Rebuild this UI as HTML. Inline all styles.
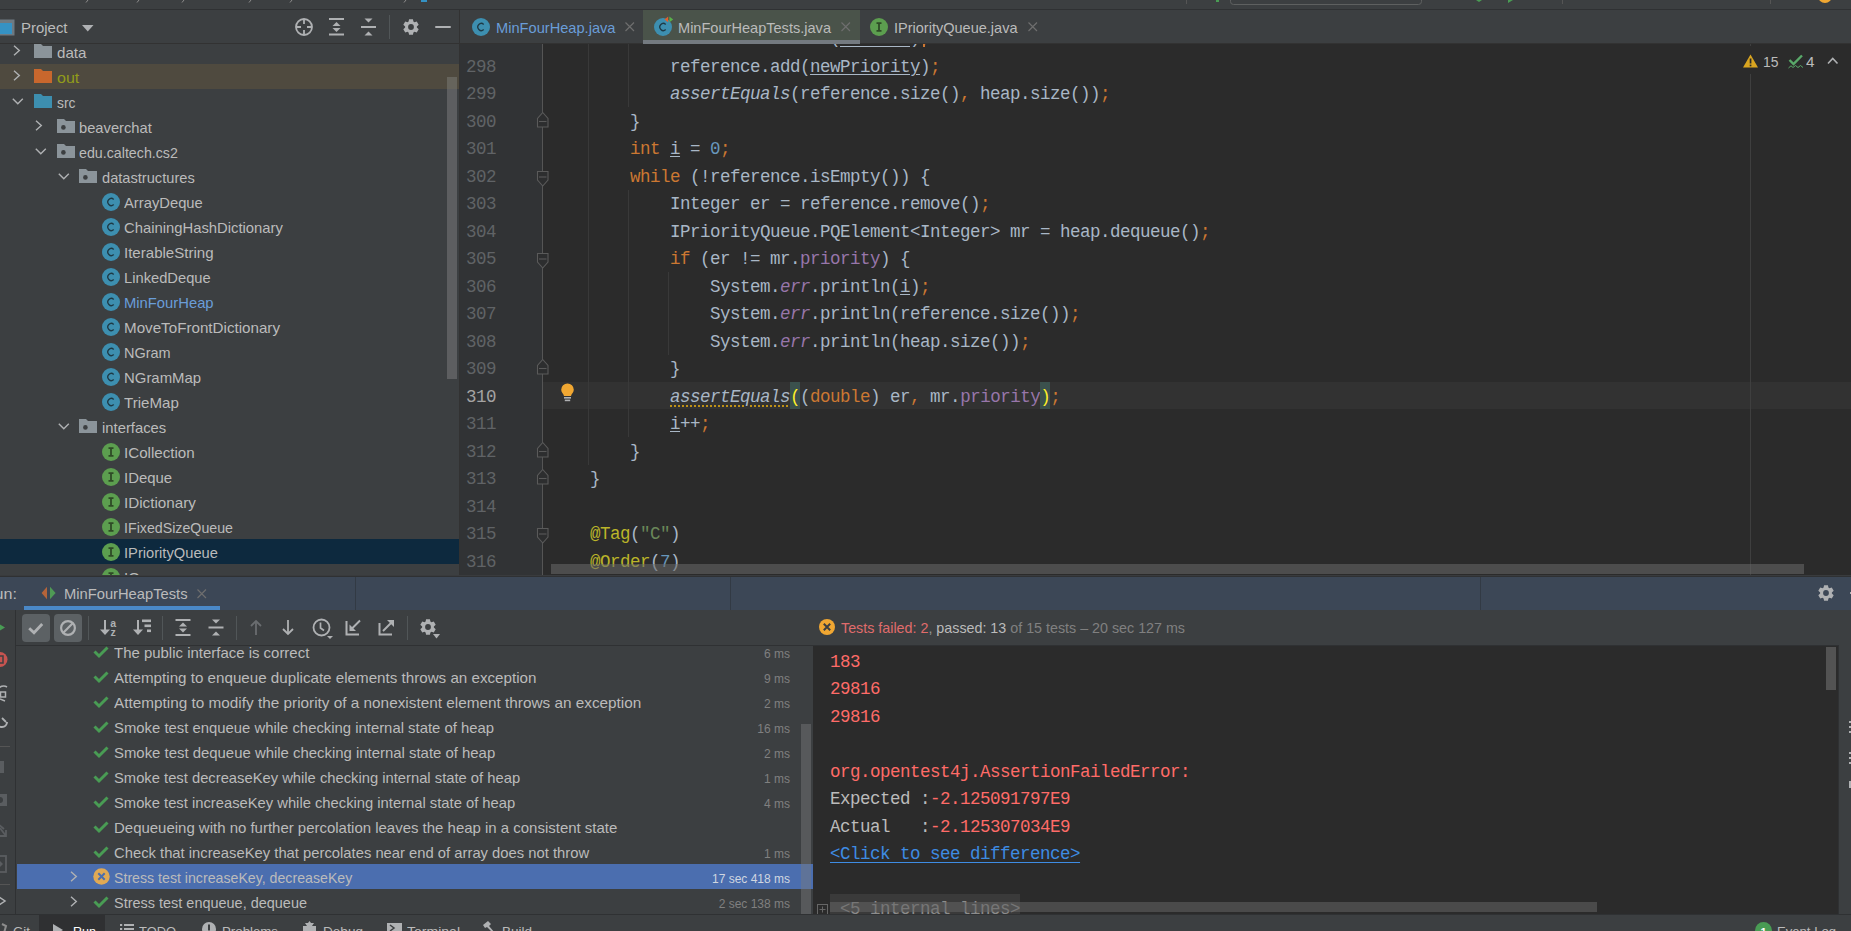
<!DOCTYPE html>
<html><head><meta charset="utf-8"><style>
html,body{margin:0;padding:0;}
body{width:1851px;height:931px;overflow:hidden;position:relative;background:#3C3F41;font-family:"Liberation Sans", sans-serif;}
body div{position:absolute;}
.t{white-space:pre;line-height:normal;transform-origin:0 0;font-family:"Liberation Sans", sans-serif;}
.m{white-space:pre;line-height:normal;font-family:"Liberation Mono", monospace;letter-spacing:-0.5px;}
svg{position:absolute;overflow:visible;}
</style></head><body>
<div style="left:0px;top:0px;width:1851px;height:9px;background:#3C3F41;"></div>
<div style="left:0px;top:9px;width:1851px;height:1px;background:#2F3133;"></div>
<svg style="left:85px;top:0px;" width="4" height="3" viewBox="0 0 4 3"><path d="M3 0 L1 2.5" stroke="#8C8C8C" stroke-width="1"/></svg>
<svg style="left:136px;top:0px;" width="4" height="3" viewBox="0 0 4 3"><path d="M3 0 L1 2.5" stroke="#8C8C8C" stroke-width="1"/></svg>
<svg style="left:181px;top:0px;" width="4" height="3" viewBox="0 0 4 3"><path d="M3 0 L1 2.5" stroke="#8C8C8C" stroke-width="1"/></svg>
<svg style="left:248px;top:0px;" width="4" height="3" viewBox="0 0 4 3"><path d="M3 0 L1 2.5" stroke="#8C8C8C" stroke-width="1"/></svg>
<svg style="left:289px;top:0px;" width="4" height="3" viewBox="0 0 4 3"><path d="M3 0 L1 2.5" stroke="#8C8C8C" stroke-width="1"/></svg>
<svg style="left:403px;top:0px;" width="4" height="3" viewBox="0 0 4 3"><path d="M3 0 L1 2.5" stroke="#8C8C8C" stroke-width="1"/></svg>
<svg style="left:421px;top:0px;" width="6" height="3" viewBox="0 0 6 3"><rect x="0" y="0" width="6" height="2" fill="#3592C4"/></svg>
<svg style="left:1230px;top:-10px;" width="192" height="15" viewBox="0 0 192 15"><rect x="0.5" y="0.5" width="191" height="14" rx="3" fill="none" stroke="#5E6060"/></svg>
<div style="left:1186px;top:0px;width:1px;height:4px;background:#555555;"></div>
<div style="left:1562px;top:0px;width:1px;height:4px;background:#555555;"></div>
<div style="left:1770px;top:0px;width:1px;height:4px;background:#555555;"></div>
<svg style="left:1816px;top:-8px;" width="18" height="12" viewBox="0 0 18 12"><circle cx="9" cy="4" r="7" fill="#F0A732"/></svg>
<svg style="left:1476px;top:0px;" width="6" height="3" viewBox="0 0 6 3"><path d="M0 0 L6 0 L3 2z" fill="#499C54"/></svg>
<svg style="left:1508px;top:0px;" width="5" height="3" viewBox="0 0 5 3"><path d="M0 0 L5 0 L0 3z" fill="#499C54"/></svg>
<svg style="left:1216px;top:0px;" width="4" height="2" viewBox="0 0 4 2"><rect width="3" height="2" fill="#499C54"/></svg>
<div style="left:0px;top:10px;width:459px;height:33px;background:#3C3F41;"></div>
<div style="left:0px;top:43px;width:459px;height:1px;background:#323232;"></div>
<svg style="left:-2px;top:19px;" width="17" height="17" viewBox="0 0 17 17"><rect x="0.5" y="0.5" width="16" height="16" fill="#6E7A82"/><rect x="2" y="4" width="12" height="11" fill="#3592C4"/></svg>
<div class="t" style="left:21px;top:19.42px;font-size:15px;color:#BBBBBB;transform:scaleX(0.9960);">Project</div>
<svg style="left:82px;top:25px;" width="12" height="7" viewBox="0 0 12 7"><path d="M0 0 L11.5 0 L5.75 6.5z" fill="#AFB1B3"/></svg>
<svg style="left:294px;top:17px;" width="20" height="20" viewBox="0 0 20 20"><circle cx="10" cy="10" r="8" fill="none" stroke="#AFB1B3" stroke-width="1.8"/><path d="M10 2v5M10 13v5M2 10h5M13 10h5" stroke="#AFB1B3" stroke-width="1.8"/></svg>
<svg style="left:328px;top:17px;" width="18" height="20" viewBox="0 0 18 20"><rect x="1" y="1" width="15" height="2" fill="#AFB1B3"/><rect x="1" y="16.5" width="15" height="2" fill="#AFB1B3"/><path d="M4.5 9 L8.5 5 L12.5 9z M4.5 11 L8.5 15 L12.5 11z" fill="#AFB1B3"/></svg>
<svg style="left:360px;top:17px;" width="18" height="20" viewBox="0 0 18 20"><path d="M4.5 1.5 L8.5 5.5 L12.5 1.5z M4.5 18.5 L8.5 14.5 L12.5 18.5z" fill="#AFB1B3"/><rect x="1" y="9" width="15" height="2" fill="#AFB1B3"/></svg>
<div style="left:389px;top:15px;width:1px;height:24px;background:#515658;"></div>
<svg style="left:403px;top:19px;" width="16" height="16" viewBox="0 0 16 16"><path fill="#AFB1B3" fill-rule="evenodd" d="M5.60 2.61 L6.06 0.24 L9.94 0.24 L10.40 2.61 L11.47 3.23 L13.75 2.44 L15.69 5.79 L13.87 7.38 L13.87 8.62 L15.69 10.21 L13.75 13.56 L11.47 12.77 L10.40 13.39 L9.94 15.76 L6.06 15.76 L5.60 13.39 L4.53 12.77 L2.25 13.56 L0.31 10.21 L2.13 8.62 L2.13 7.38 L0.31 5.79 L2.25 2.44 L4.53 3.23z M8 5.1 A2.9 2.9 0 1 0 8 10.9 A2.9 2.9 0 1 0 8 5.1z"/></svg>
<div style="left:435px;top:25.6px;width:16px;height:2.7px;background:#AFB1B3;border-radius:1px;"></div>
<div style="left:460px;top:10px;width:1391px;height:33px;background:#3C3F41;"></div>
<div style="left:460px;top:43px;width:1391px;height:1px;background:#323232;"></div>
<div style="left:643px;top:10px;width:217px;height:30px;background:#4A534A;"></div>
<div style="left:643px;top:40px;width:217px;height:4px;background:#747A80;"></div>
<svg style="left:472px;top:18px;" width="18" height="18" viewBox="0 0 18 18"><circle cx="9" cy="9" r="9" fill="#3D8FB0"/><path d="M11.7 6.4 A3.5 3.5 0 1 0 11.7 11.6" fill="none" stroke="#1E3A46" stroke-width="1.35"/></svg>
<div class="t" style="left:496px;top:19.42px;font-size:15px;color:#6A9DD8;transform:scaleX(0.9750);">MinFourHeap.java</div>
<svg style="left:625px;top:22px;" width="10" height="10" viewBox="0 0 10 10"><path d="M0.5 0.5 L9 9 M9 0.5 L0.5 9" stroke="#6E6E6E" stroke-width="1.2"/></svg>
<svg style="left:654px;top:18px;" width="18" height="18" viewBox="0 0 18 18"><circle cx="9" cy="9" r="9" fill="#3D8FB0"/><path d="M11.7 6.4 A3.5 3.5 0 1 0 11.7 11.6" fill="none" stroke="#1E3A46" stroke-width="1.35"/></svg>
<svg style="left:664px;top:16px;" width="10" height="8" viewBox="0 0 10 8"><path d="M4.2 0.5 L0.5 3.4 L4.2 6.3z" fill="#E0602D"/><path d="M5.4 0.5 L9.2 3.4 L5.4 6.3z" fill="#59B04A"/></svg>
<div class="t" style="left:678px;top:19.42px;font-size:15px;color:#BBBBBB;transform:scaleX(0.9709);">MinFourHeapTests.java</div>
<svg style="left:841px;top:22px;" width="10" height="10" viewBox="0 0 10 10"><path d="M0.5 0.5 L9 9 M9 0.5 L0.5 9" stroke="#6E6E6E" stroke-width="1.2"/></svg>
<svg style="left:870px;top:18px;" width="18" height="18" viewBox="0 0 18 18"><circle cx="9" cy="9" r="9" fill="#5C9E4F"/><path d="M6.5 5.2h5M6.5 12.8h5M9 5.2v7.6" stroke="#2E4A26" stroke-width="1.8"/></svg>
<div class="t" style="left:894px;top:19.42px;font-size:15px;color:#BBBBBB;transform:scaleX(0.9682);">IPriorityQueue.java</div>
<svg style="left:1028px;top:22px;" width="10" height="10" viewBox="0 0 10 10"><path d="M0.5 0.5 L9 9 M9 0.5 L0.5 9" stroke="#6E6E6E" stroke-width="1.2"/></svg>
<div style="left:0px;top:44px;width:459px;height:531px;background:#3C3F41;"></div>
<div style="left:0px;top:64px;width:459px;height:25px;background:#4F4A3F;"></div>
<div style="left:0px;top:539px;width:459px;height:25px;background:#0D293E;"></div>
<div style="left:459px;top:10px;width:1px;height:565px;background:#323232;"></div>
<div style="left:447px;top:77px;width:10px;height:302px;background:#5D5E60;"></div>
<div style="left:447px;top:77px;width:10px;height:12px;background:#66645C;"></div>
<svg style="left:13px;top:45px;" width="8" height="11" viewBox="0 0 8 11"><path d="M1 0.8 L6.3 5.5 L1 10.2" fill="none" stroke="#AFB1B3" stroke-width="1.4"/></svg>
<svg style="left:34px;top:44px;" width="18" height="14" viewBox="0 0 18 14"><path d="M0 0h7l2 2h9v12H0z" fill="#8B949A"/></svg>
<div class="t" style="left:57px;top:44.42px;font-size:15px;color:#BBBBBB;transform:scaleX(1.0102);">data</div>
<svg style="left:13px;top:70px;" width="8" height="11" viewBox="0 0 8 11"><path d="M1 0.8 L6.3 5.5 L1 10.2" fill="none" stroke="#AFB1B3" stroke-width="1.4"/></svg>
<svg style="left:34px;top:69px;" width="18" height="14" viewBox="0 0 18 14"><path d="M0 0h7l2 2h9v12H0z" fill="#C8672D"/></svg>
<div class="t" style="left:57px;top:69.42px;font-size:15px;color:#929C1A;transform:scaleX(1.0691);">out</div>
<svg style="left:12px;top:98px;" width="12" height="7" viewBox="0 0 12 7"><path d="M0.8 0.8 L5.8 5.8 L10.8 0.8" fill="none" stroke="#AFB1B3" stroke-width="1.4"/></svg>
<svg style="left:34px;top:94px;" width="18" height="14" viewBox="0 0 18 14"><path d="M0 0h7l2 2h9v12H0z" fill="#3D8FB0"/></svg>
<div class="t" style="left:57px;top:94.42px;font-size:15px;color:#BBBBBB;transform:scaleX(0.9250);">src</div>
<svg style="left:35px;top:120px;" width="8" height="11" viewBox="0 0 8 11"><path d="M1 0.8 L6.3 5.5 L1 10.2" fill="none" stroke="#AFB1B3" stroke-width="1.4"/></svg>
<svg style="left:57px;top:119px;" width="18" height="14" viewBox="0 0 18 14"><path d="M0 0h7l2 2h9v12H0z" fill="#8B949A"/><circle cx="6.4" cy="8.4" r="2.3" fill="#3C3F41"/></svg>
<div class="t" style="left:79px;top:119.42px;font-size:15px;color:#BBBBBB;transform:scaleX(0.9809);">beaverchat</div>
<svg style="left:34.5px;top:148px;" width="12" height="7" viewBox="0 0 12 7"><path d="M0.8 0.8 L5.8 5.8 L10.8 0.8" fill="none" stroke="#AFB1B3" stroke-width="1.4"/></svg>
<svg style="left:57px;top:144px;" width="18" height="14" viewBox="0 0 18 14"><path d="M0 0h7l2 2h9v12H0z" fill="#8B949A"/><circle cx="6.4" cy="8.4" r="2.3" fill="#3C3F41"/></svg>
<div class="t" style="left:79px;top:144.43px;font-size:15px;color:#BBBBBB;transform:scaleX(0.9488);">edu.caltech.cs2</div>
<svg style="left:57.5px;top:173px;" width="12" height="7" viewBox="0 0 12 7"><path d="M0.8 0.8 L5.8 5.8 L10.8 0.8" fill="none" stroke="#AFB1B3" stroke-width="1.4"/></svg>
<svg style="left:79px;top:169px;" width="18" height="14" viewBox="0 0 18 14"><path d="M0 0h7l2 2h9v12H0z" fill="#8B949A"/><circle cx="6.4" cy="8.4" r="2.3" fill="#3C3F41"/></svg>
<div class="t" style="left:102px;top:169.43px;font-size:15px;color:#BBBBBB;transform:scaleX(0.9753);">datastructures</div>
<svg style="left:102px;top:193px;" width="18" height="18" viewBox="0 0 18 18"><circle cx="9" cy="9" r="9" fill="#3D8FB0"/><path d="M11.7 6.4 A3.5 3.5 0 1 0 11.7 11.6" fill="none" stroke="#1E3A46" stroke-width="1.35"/></svg>
<div class="t" style="left:124px;top:194.43px;font-size:15px;color:#BBBBBB;transform:scaleX(0.9844);">ArrayDeque</div>
<svg style="left:102px;top:218px;" width="18" height="18" viewBox="0 0 18 18"><circle cx="9" cy="9" r="9" fill="#3D8FB0"/><path d="M11.7 6.4 A3.5 3.5 0 1 0 11.7 11.6" fill="none" stroke="#1E3A46" stroke-width="1.35"/></svg>
<div class="t" style="left:124px;top:219.43px;font-size:15px;color:#BBBBBB;transform:scaleX(0.9874);">ChainingHashDictionary</div>
<svg style="left:102px;top:243px;" width="18" height="18" viewBox="0 0 18 18"><circle cx="9" cy="9" r="9" fill="#3D8FB0"/><path d="M11.7 6.4 A3.5 3.5 0 1 0 11.7 11.6" fill="none" stroke="#1E3A46" stroke-width="1.35"/></svg>
<div class="t" style="left:124px;top:244.43px;font-size:15px;color:#BBBBBB;transform:scaleX(1.0043);">IterableString</div>
<svg style="left:102px;top:268px;" width="18" height="18" viewBox="0 0 18 18"><circle cx="9" cy="9" r="9" fill="#3D8FB0"/><path d="M11.7 6.4 A3.5 3.5 0 1 0 11.7 11.6" fill="none" stroke="#1E3A46" stroke-width="1.35"/></svg>
<div class="t" style="left:124px;top:269.43px;font-size:15px;color:#BBBBBB;transform:scaleX(0.9807);">LinkedDeque</div>
<svg style="left:102px;top:293px;" width="18" height="18" viewBox="0 0 18 18"><circle cx="9" cy="9" r="9" fill="#3D8FB0"/><path d="M11.7 6.4 A3.5 3.5 0 1 0 11.7 11.6" fill="none" stroke="#1E3A46" stroke-width="1.35"/></svg>
<div class="t" style="left:124px;top:294.43px;font-size:15px;color:#6A9DD8;transform:scaleX(0.9860);">MinFourHeap</div>
<svg style="left:102px;top:318px;" width="18" height="18" viewBox="0 0 18 18"><circle cx="9" cy="9" r="9" fill="#3D8FB0"/><path d="M11.7 6.4 A3.5 3.5 0 1 0 11.7 11.6" fill="none" stroke="#1E3A46" stroke-width="1.35"/></svg>
<div class="t" style="left:124px;top:319.43px;font-size:15px;color:#BBBBBB;transform:scaleX(1.0116);">MoveToFrontDictionary</div>
<svg style="left:102px;top:343px;" width="18" height="18" viewBox="0 0 18 18"><circle cx="9" cy="9" r="9" fill="#3D8FB0"/><path d="M11.7 6.4 A3.5 3.5 0 1 0 11.7 11.6" fill="none" stroke="#1E3A46" stroke-width="1.35"/></svg>
<div class="t" style="left:124px;top:344.43px;font-size:15px;color:#BBBBBB;transform:scaleX(0.9660);">NGram</div>
<svg style="left:102px;top:368px;" width="18" height="18" viewBox="0 0 18 18"><circle cx="9" cy="9" r="9" fill="#3D8FB0"/><path d="M11.7 6.4 A3.5 3.5 0 1 0 11.7 11.6" fill="none" stroke="#1E3A46" stroke-width="1.35"/></svg>
<div class="t" style="left:124px;top:369.43px;font-size:15px;color:#BBBBBB;transform:scaleX(0.9946);">NGramMap</div>
<svg style="left:102px;top:393px;" width="18" height="18" viewBox="0 0 18 18"><circle cx="9" cy="9" r="9" fill="#3D8FB0"/><path d="M11.7 6.4 A3.5 3.5 0 1 0 11.7 11.6" fill="none" stroke="#1E3A46" stroke-width="1.35"/></svg>
<div class="t" style="left:124px;top:394.43px;font-size:15px;color:#BBBBBB;transform:scaleX(1.0061);">TrieMap</div>
<svg style="left:57.5px;top:423px;" width="12" height="7" viewBox="0 0 12 7"><path d="M0.8 0.8 L5.8 5.8 L10.8 0.8" fill="none" stroke="#AFB1B3" stroke-width="1.4"/></svg>
<svg style="left:79px;top:419px;" width="18" height="14" viewBox="0 0 18 14"><path d="M0 0h7l2 2h9v12H0z" fill="#8B949A"/><circle cx="6.4" cy="8.4" r="2.3" fill="#3C3F41"/></svg>
<div class="t" style="left:102px;top:419.43px;font-size:15px;color:#BBBBBB;transform:scaleX(0.9885);">interfaces</div>
<svg style="left:102px;top:443px;" width="18" height="18" viewBox="0 0 18 18"><circle cx="9" cy="9" r="9" fill="#5C9E4F"/><path d="M6.5 5.2h5M6.5 12.8h5M9 5.2v7.6" stroke="#2E4A26" stroke-width="1.8"/></svg>
<div class="t" style="left:124px;top:444.43px;font-size:15px;color:#BBBBBB;transform:scaleX(1.0093);">ICollection</div>
<svg style="left:102px;top:468px;" width="18" height="18" viewBox="0 0 18 18"><circle cx="9" cy="9" r="9" fill="#5C9E4F"/><path d="M6.5 5.2h5M6.5 12.8h5M9 5.2v7.6" stroke="#2E4A26" stroke-width="1.8"/></svg>
<div class="t" style="left:124px;top:469.43px;font-size:15px;color:#BBBBBB;transform:scaleX(0.9943);">IDeque</div>
<svg style="left:102px;top:493px;" width="18" height="18" viewBox="0 0 18 18"><circle cx="9" cy="9" r="9" fill="#5C9E4F"/><path d="M6.5 5.2h5M6.5 12.8h5M9 5.2v7.6" stroke="#2E4A26" stroke-width="1.8"/></svg>
<div class="t" style="left:124px;top:494.43px;font-size:15px;color:#BBBBBB;transform:scaleX(1.0147);">IDictionary</div>
<svg style="left:102px;top:518px;" width="18" height="18" viewBox="0 0 18 18"><circle cx="9" cy="9" r="9" fill="#5C9E4F"/><path d="M6.5 5.2h5M6.5 12.8h5M9 5.2v7.6" stroke="#2E4A26" stroke-width="1.8"/></svg>
<div class="t" style="left:124px;top:519.42px;font-size:15px;color:#BBBBBB;transform:scaleX(0.9472);">IFixedSizeQueue</div>
<svg style="left:102px;top:543px;" width="18" height="18" viewBox="0 0 18 18"><circle cx="9" cy="9" r="9" fill="#5C9E4F"/><path d="M6.5 5.2h5M6.5 12.8h5M9 5.2v7.6" stroke="#2E4A26" stroke-width="1.8"/></svg>
<div class="t" style="left:124px;top:544.42px;font-size:15px;color:#BBBBBB;transform:scaleX(0.9794);">IPriorityQueue</div>
<svg style="left:102px;top:568px;" width="18" height="18" viewBox="0 0 18 18"><circle cx="9" cy="9" r="9" fill="#5C9E4F"/><path d="M6.5 5.2h5M6.5 12.8h5M9 5.2v7.6" stroke="#2E4A26" stroke-width="1.8"/></svg>
<div class="t" style="left:124px;top:569.42px;font-size:15px;color:#BBBBBB;">IQueue</div>
<div style="left:0px;top:575px;width:1851px;height:2px;background:#2B2B2B;"></div>
<div style="left:460px;top:44px;width:1391px;height:531px;overflow:hidden;">
<div style="left:0px;top:0px;width:83px;height:531px;background:#313335;"></div>
<div style="left:83px;top:0px;width:1308px;height:531px;background:#2B2B2B;"></div>
<div style="left:83px;top:338px;width:1308px;height:27px;background:#323232;"></div>
<div style="left:330px;top:338px;width:10px;height:27px;background:#3B514D;"></div>
<div style="left:580px;top:338px;width:10px;height:27px;background:#3B514D;"></div>
<div style="left:1290px;top:0px;width:1px;height:2px;background:#3F3F3F;"></div>
<div style="left:1290px;top:30px;width:1px;height:501px;background:#3F3F3F;"></div>
<div style="left:128px;top:0px;width:1px;height:420.5px;background:#393939;"></div>
<div style="left:168px;top:0px;width:1px;height:63px;background:#393939;"></div>
<div style="left:168px;top:145.5px;width:1px;height:247.5px;background:#393939;"></div>
<div style="left:208px;top:228px;width:1px;height:82.5px;background:#393939;"></div>
<div style="left:82px;top:0px;width:1px;height:531px;background:#555555;"></div>
<svg style="left:77px;top:67.8px;" width="12" height="16" viewBox="0 0 12 16"><path d="M5.75 0.5 L11 6.5 V15 H0.5 V6.5z" fill="#2D2E2F" stroke="#5A5A5A" stroke-width="1.1"/><path d="M2 9.5 H9.5" stroke="#5A5A5A" stroke-width="1.1"/></svg>
<svg style="left:77px;top:314.8px;" width="12" height="16" viewBox="0 0 12 16"><path d="M5.75 0.5 L11 6.5 V15 H0.5 V6.5z" fill="#2D2E2F" stroke="#5A5A5A" stroke-width="1.1"/><path d="M2 9.5 H9.5" stroke="#5A5A5A" stroke-width="1.1"/></svg>
<svg style="left:77px;top:397.8px;" width="12" height="16" viewBox="0 0 12 16"><path d="M5.75 0.5 L11 6.5 V15 H0.5 V6.5z" fill="#2D2E2F" stroke="#5A5A5A" stroke-width="1.1"/><path d="M2 9.5 H9.5" stroke="#5A5A5A" stroke-width="1.1"/></svg>
<svg style="left:77px;top:424.8px;" width="12" height="16" viewBox="0 0 12 16"><path d="M5.75 0.5 L11 6.5 V15 H0.5 V6.5z" fill="#2D2E2F" stroke="#5A5A5A" stroke-width="1.1"/><path d="M2 9.5 H9.5" stroke="#5A5A5A" stroke-width="1.1"/></svg>
<svg style="left:77px;top:126.6px;" width="12" height="16" viewBox="0 0 12 16"><path d="M0.5 0.5 H11 V9 L5.75 15 L0.5 9z" fill="#2D2E2F" stroke="#5A5A5A" stroke-width="1.1"/><path d="M2 6 H9.5" stroke="#5A5A5A" stroke-width="1.1"/></svg>
<svg style="left:77px;top:208.6px;" width="12" height="16" viewBox="0 0 12 16"><path d="M0.5 0.5 H11 V9 L5.75 15 L0.5 9z" fill="#2D2E2F" stroke="#5A5A5A" stroke-width="1.1"/><path d="M2 6 H9.5" stroke="#5A5A5A" stroke-width="1.1"/></svg>
<svg style="left:77px;top:483.6px;" width="12" height="16" viewBox="0 0 12 16"><path d="M0.5 0.5 H11 V9 L5.75 15 L0.5 9z" fill="#2D2E2F" stroke="#5A5A5A" stroke-width="1.1"/><path d="M2 6 H9.5" stroke="#5A5A5A" stroke-width="1.1"/></svg>
<div class="m" style="left:6px;top:13.43px;font-size:17.5px;"><span style="color:#606366">298</span></div>
<div class="m" style="left:6px;top:40.43px;font-size:17.5px;"><span style="color:#606366">299</span></div>
<div class="m" style="left:6px;top:68.43px;font-size:17.5px;"><span style="color:#606366">300</span></div>
<div class="m" style="left:6px;top:95.43px;font-size:17.5px;"><span style="color:#606366">301</span></div>
<div class="m" style="left:6px;top:123.43px;font-size:17.5px;"><span style="color:#606366">302</span></div>
<div class="m" style="left:6px;top:150.43px;font-size:17.5px;"><span style="color:#606366">303</span></div>
<div class="m" style="left:6px;top:178.43px;font-size:17.5px;"><span style="color:#606366">304</span></div>
<div class="m" style="left:6px;top:205.43px;font-size:17.5px;"><span style="color:#606366">305</span></div>
<div class="m" style="left:6px;top:233.43px;font-size:17.5px;"><span style="color:#606366">306</span></div>
<div class="m" style="left:6px;top:260.43px;font-size:17.5px;"><span style="color:#606366">307</span></div>
<div class="m" style="left:6px;top:288.43px;font-size:17.5px;"><span style="color:#606366">308</span></div>
<div class="m" style="left:6px;top:315.43px;font-size:17.5px;"><span style="color:#606366">309</span></div>
<div class="m" style="left:6px;top:343.43px;font-size:17.5px;"><span style="color:#A4A3A3">310</span></div>
<div class="m" style="left:6px;top:370.43px;font-size:17.5px;"><span style="color:#606366">311</span></div>
<div class="m" style="left:6px;top:398.43px;font-size:17.5px;"><span style="color:#606366">312</span></div>
<div class="m" style="left:6px;top:425.43px;font-size:17.5px;"><span style="color:#606366">313</span></div>
<div class="m" style="left:6px;top:453.43px;font-size:17.5px;"><span style="color:#606366">314</span></div>
<div class="m" style="left:6px;top:480.43px;font-size:17.5px;"><span style="color:#606366">315</span></div>
<div class="m" style="left:6px;top:508.43px;font-size:17.5px;"><span style="color:#606366">316</span></div>
<div class="m" style="left:210px;top:-16.07px;font-size:17.5px;"><span style="color:#A9B7C6">reference.remove(element)</span><span style="color:#CC7832">;</span></div>
<div style="left:380px;top:2px;width:70px;height:1px;background:#A9B7C6;"></div>
<div style="left:463px;top:0px;width:2px;height:3px;background:#CC7832;"></div>
<div class="m" style="left:210px;top:13.43px;font-size:17.5px;"><span style="color:#A9B7C6">reference.add(</span><span style="color:#A9B7C6;text-decoration:underline;text-decoration-color:#A9B7C6;text-underline-offset:2px">newPriority</span><span style="color:#A9B7C6">)</span><span style="color:#CC7832">;</span></div>
<div class="m" style="left:210px;top:40.43px;font-size:17.5px;"><span style="color:#A9B7C6;font-style:italic">assertEquals</span><span style="color:#A9B7C6">(reference.size()</span><span style="color:#CC7832">,</span><span style="color:#A9B7C6"> heap.size())</span><span style="color:#CC7832">;</span></div>
<div class="m" style="left:170px;top:68.43px;font-size:17.5px;"><span style="color:#A9B7C6">}</span></div>
<div class="m" style="left:170px;top:95.43px;font-size:17.5px;"><span style="color:#CC7832">int </span><span style="color:#A9B7C6;text-decoration:underline;text-decoration-color:#A9B7C6;text-underline-offset:2px">i</span><span style="color:#A9B7C6"> = </span><span style="color:#6897BB">0</span><span style="color:#CC7832">;</span></div>
<div class="m" style="left:170px;top:123.43px;font-size:17.5px;"><span style="color:#CC7832">while </span><span style="color:#A9B7C6">(!reference.isEmpty()) {</span></div>
<div class="m" style="left:210px;top:150.43px;font-size:17.5px;"><span style="color:#A9B7C6">Integer er = reference.remove()</span><span style="color:#CC7832">;</span></div>
<div class="m" style="left:210px;top:178.43px;font-size:17.5px;"><span style="color:#A9B7C6">IPriorityQueue.PQElement&lt;Integer&gt; mr = heap.dequeue()</span><span style="color:#CC7832">;</span></div>
<div class="m" style="left:210px;top:205.43px;font-size:17.5px;"><span style="color:#CC7832">if </span><span style="color:#A9B7C6">(er != mr.</span><span style="color:#9876AA">priority</span><span style="color:#A9B7C6">) {</span></div>
<div class="m" style="left:250px;top:233.43px;font-size:17.5px;"><span style="color:#A9B7C6">System.</span><span style="color:#9876AA;font-style:italic">err</span><span style="color:#A9B7C6">.println(</span><span style="color:#A9B7C6;text-decoration:underline;text-decoration-color:#A9B7C6;text-underline-offset:2px">i</span><span style="color:#A9B7C6">)</span><span style="color:#CC7832">;</span></div>
<div class="m" style="left:250px;top:260.43px;font-size:17.5px;"><span style="color:#A9B7C6">System.</span><span style="color:#9876AA;font-style:italic">err</span><span style="color:#A9B7C6">.println(reference.size())</span><span style="color:#CC7832">;</span></div>
<div class="m" style="left:250px;top:288.43px;font-size:17.5px;"><span style="color:#A9B7C6">System.</span><span style="color:#9876AA;font-style:italic">err</span><span style="color:#A9B7C6">.println(heap.size())</span><span style="color:#CC7832">;</span></div>
<div class="m" style="left:210px;top:315.43px;font-size:17.5px;"><span style="color:#A9B7C6">}</span></div>
<div class="m" style="left:210px;top:343.43px;font-size:17.5px;"><span style="color:#A9B7C6;font-style:italic;text-decoration:underline dotted #BE9117;text-underline-offset:3px;text-decoration-thickness:2px">assertEquals</span><span style="color:#FFEF28;background:#3B514D">(</span><span style="color:#A9B7C6">(</span><span style="color:#CC7832">double</span><span style="color:#A9B7C6">) er</span><span style="color:#CC7832">,</span><span style="color:#A9B7C6"> mr.</span><span style="color:#9876AA">priority</span><span style="color:#FFEF28;background:#3B514D">)</span><span style="color:#CC7832">;</span></div>
<div class="m" style="left:210px;top:370.43px;font-size:17.5px;"><span style="color:#A9B7C6;text-decoration:underline;text-decoration-color:#A9B7C6;text-underline-offset:2px">i</span><span style="color:#A9B7C6">++</span><span style="color:#CC7832">;</span></div>
<div class="m" style="left:170px;top:398.43px;font-size:17.5px;"><span style="color:#A9B7C6">}</span></div>
<div class="m" style="left:130px;top:425.43px;font-size:17.5px;"><span style="color:#A9B7C6">}</span></div>
<div class="m" style="left:130px;top:480.43px;font-size:17.5px;"><span style="color:#BBB529">@Tag</span><span style="color:#A9B7C6">(</span><span style="color:#6A8759">&quot;C&quot;</span><span style="color:#A9B7C6">)</span></div>
<div class="m" style="left:130px;top:508.43px;font-size:17.5px;"><span style="color:#BBB529">@Order</span><span style="color:#A9B7C6">(</span><span style="color:#6897BB">7</span><span style="color:#A9B7C6">)</span></div>
<svg style="left:100px;top:339px;" width="16" height="20" viewBox="0 0 16 20"><path d="M7.5 0.5 A6.3 6.3 0 0 1 13.8 6.8 C13.8 9.6 11.6 10.6 11 13 H4 C3.4 10.6 1.2 9.6 1.2 6.8 A6.3 6.3 0 0 1 7.5 0.5z" fill="#F0A732"/><rect x="4" y="14" width="7" height="1.6" fill="#AFB1B3"/><rect x="4.8" y="16.6" width="5.4" height="1.6" fill="#AFB1B3"/></svg>
<svg style="left:1283px;top:10px;" width="16" height="14" viewBox="0 0 16 14"><path d="M7.5 0.5 L15 13.5 H0 z" fill="#D9A520"/><rect x="6.7" y="4.5" width="1.7" height="5" fill="#2B2B2B"/><rect x="6.7" y="10.6" width="1.7" height="1.7" fill="#2B2B2B"/></svg>
<div class="t" style="left:1303px;top:8.92px;font-size:15px;color:#BBBBBB;transform:scaleX(0.9288);">15</div>
<svg style="left:1328px;top:9px;" width="16" height="16" viewBox="0 0 16 16"><path d="M1.5 7 L5.5 11 L14 2.5" fill="none" stroke="#59A869" stroke-width="2.4"/><path d="M0.5 15 L3 12.8 L5 14.5 L7.5 12.5 L10 14.5 L12.5 12.5 L15 14.5" fill="none" stroke="#59A869" stroke-width="1"/></svg>
<div class="t" style="left:1346px;top:8.92px;font-size:15px;color:#BBBBBB;transform:scaleX(1.0187);">4</div>
<svg style="left:1367px;top:13px;" width="12" height="8" viewBox="0 0 12 8"><path d="M1 6.5 L5.75 1.5 L10.5 6.5" fill="none" stroke="#AFB1B3" stroke-width="1.6"/></svg>
<div style="left:91px;top:520px;width:1253px;height:10px;background:rgba(106,106,106,0.55);"></div>
</div>
<div style="left:0px;top:575px;width:1851px;height:1px;background:#393B3D;"></div>
<div style="left:0px;top:576px;width:1851px;height:1px;background:#2F3133;"></div>
<div style="left:0px;top:577px;width:1851px;height:33px;background:#3C4756;"></div>
<div style="left:730px;top:577px;width:1px;height:33px;background:#323A44;"></div>
<div style="left:355px;top:577px;width:1px;height:33px;background:#323A44;"></div>
<div style="left:1480px;top:577px;width:1px;height:33px;background:#323A44;"></div>
<div class="t" style="left:-17.5px;top:584.92px;font-size:15px;color:#BBBBBB;transform:scaleX(1.0730);">Run:</div>
<svg style="left:41px;top:586px;" width="16" height="14" viewBox="0 0 16 14"><path d="M6 0.8 L0.6 7 L6 13.2z" fill="#B5643A"/><path d="M9 0.8 L14.6 7 L9 13.2z" fill="#4F9A55"/></svg>
<div class="t" style="left:64px;top:584.92px;font-size:15px;color:#BBBBBB;transform:scaleX(0.9810);">MinFourHeapTests</div>
<svg style="left:197px;top:589px;" width="10" height="10" viewBox="0 0 10 10"><path d="M0.5 0.5 L9 9 M9 0.5 L0.5 9" stroke="#6E6E6E" stroke-width="1.2"/></svg>
<div style="left:24px;top:606px;width:196px;height:4px;background:#4A88C7;"></div>
<svg style="left:1818px;top:585px;" width="16" height="16" viewBox="0 0 16 16"><path fill="#AFB1B3" fill-rule="evenodd" d="M5.60 2.61 L6.06 0.24 L9.94 0.24 L10.40 2.61 L11.47 3.23 L13.75 2.44 L15.69 5.79 L13.87 7.38 L13.87 8.62 L15.69 10.21 L13.75 13.56 L11.47 12.77 L10.40 13.39 L9.94 15.76 L6.06 15.76 L5.60 13.39 L4.53 12.77 L2.25 13.56 L0.31 10.21 L2.13 8.62 L2.13 7.38 L0.31 5.79 L2.25 2.44 L4.53 3.23z M8 5.1 A2.9 2.9 0 1 0 8 10.9 A2.9 2.9 0 1 0 8 5.1z"/></svg>
<svg style="left:1850px;top:592px;" width="3" height="3" viewBox="0 0 3 3"><rect width="3" height="2" fill="#AFB1B3"/></svg>
<div style="left:0px;top:610px;width:1851px;height:35px;background:#3C3F41;"></div>
<div style="left:15px;top:610px;width:1px;height:304px;background:#2F3133;"></div>
<div style="left:16px;top:645px;width:1823px;height:1px;background:#2F3133;"></div>
<div style="left:22px;top:614px;width:28px;height:28px;background:#5C6164;border-radius:4px;"></div>
<div style="left:54px;top:614px;width:28px;height:28px;background:#5C6164;border-radius:4px;"></div>
<svg style="left:27px;top:619px;" width="18" height="18" viewBox="0 0 18 18"><path d="M2.2 9.2 L7 13.8 L15.2 5" fill="none" stroke="#AFB1B3" stroke-width="2.8"/></svg>
<svg style="left:59px;top:619px;" width="18" height="18" viewBox="0 0 18 18"><circle cx="9" cy="9" r="6.9" fill="none" stroke="#AFB1B3" stroke-width="2.2"/><path d="M4.3 13.7 L13.7 4.3" stroke="#AFB1B3" stroke-width="2.2"/></svg>
<div style="left:88px;top:616px;width:1px;height:24px;background:#515658;"></div>
<div style="left:162px;top:616px;width:1px;height:24px;background:#515658;"></div>
<div style="left:236px;top:616px;width:1px;height:24px;background:#515658;"></div>
<div style="left:407px;top:616px;width:1px;height:24px;background:#515658;"></div>
<svg style="left:99px;top:618px;" width="20" height="20" viewBox="0 0 20 20"><path d="M6 2 V16" stroke="#AFB1B3" stroke-width="2"/><path d="M1 11.5 L6 17 L11 11.5z" fill="#AFB1B3"/><text x="11.3" y="8.6" font-family="Liberation Sans" font-size="10.5" font-weight="bold" fill="#AFB1B3">a</text><text x="11.5" y="17.8" font-family="Liberation Sans" font-size="10.5" font-weight="bold" fill="#AFB1B3">z</text></svg>
<svg style="left:132px;top:618px;" width="20" height="20" viewBox="0 0 20 20"><path d="M6 2 V16" stroke="#AFB1B3" stroke-width="2"/><path d="M1 11.5 L6 17 L11 11.5z" fill="#AFB1B3"/><rect x="10" y="1.5" width="9" height="2.6" fill="#AFB1B3"/><rect x="12.5" y="6.5" width="6.5" height="2.6" fill="#AFB1B3"/><rect x="15" y="11.5" width="4" height="2.6" fill="#AFB1B3"/></svg>
<svg style="left:175px;top:618px;" width="18" height="20" viewBox="0 0 18 20"><rect x="0.5" y="1" width="15" height="2" fill="#AFB1B3"/><rect x="0.5" y="16" width="15" height="2" fill="#AFB1B3"/><path d="M4 8.5 L8 4.5 L12 8.5z M4 10.5 L8 14.5 L12 10.5z" fill="#AFB1B3"/></svg>
<svg style="left:208px;top:618px;" width="18" height="20" viewBox="0 0 18 20"><path d="M4 1.5 L8 5.5 L12 1.5z M4 17.5 L8 13.5 L12 17.5z" fill="#AFB1B3"/><rect x="0.5" y="8.5" width="15" height="2" fill="#AFB1B3"/></svg>
<svg style="left:250px;top:619px;" width="14" height="18" viewBox="0 0 14 18"><path d="M6 2 V16" stroke="#6A6D70" stroke-width="1.8"/><path d="M1 7 L6 2 L11 7" fill="none" stroke="#6A6D70" stroke-width="1.8"/></svg>
<svg style="left:282px;top:619px;" width="14" height="18" viewBox="0 0 14 18"><path d="M6 1 V15" stroke="#AFB1B3" stroke-width="1.8"/><path d="M1 10 L6 15 L11 10" fill="none" stroke="#AFB1B3" stroke-width="1.8"/></svg>
<svg style="left:312px;top:618px;" width="22" height="22" viewBox="0 0 22 22"><circle cx="9.5" cy="9.5" r="8" fill="none" stroke="#AFB1B3" stroke-width="1.8"/><path d="M8.5 4.5 V10 L12 12.5" fill="none" stroke="#AFB1B3" stroke-width="1.7"/><path d="M15 18 L21 18 L18 21z" fill="#AFB1B3"/></svg>
<svg style="left:345px;top:619px;" width="18" height="18" viewBox="0 0 18 18"><path d="M1.5 2 V15.5 H14" fill="none" stroke="#AFB1B3" stroke-width="2"/><path d="M15 1.5 L6 10.5" stroke="#AFB1B3" stroke-width="1.9"/><path d="M4.5 5.5 V12 H11z" fill="#AFB1B3"/></svg>
<svg style="left:378px;top:619px;" width="18" height="18" viewBox="0 0 18 18"><path d="M1.5 4 V15.5 H14" fill="none" stroke="#AFB1B3" stroke-width="2"/><path d="M5 12 L14 3" stroke="#AFB1B3" stroke-width="1.9"/><path d="M9 1 H16 V8z" fill="#AFB1B3"/></svg>
<svg style="left:420px;top:619px;" width="16" height="16" viewBox="0 0 16 16"><path fill="#AFB1B3" fill-rule="evenodd" d="M5.60 2.61 L6.06 0.24 L9.94 0.24 L10.40 2.61 L11.47 3.23 L13.75 2.44 L15.69 5.79 L13.87 7.38 L13.87 8.62 L15.69 10.21 L13.75 13.56 L11.47 12.77 L10.40 13.39 L9.94 15.76 L6.06 15.76 L5.60 13.39 L4.53 12.77 L2.25 13.56 L0.31 10.21 L2.13 8.62 L2.13 7.38 L0.31 5.79 L2.25 2.44 L4.53 3.23z M8 5.1 A2.9 2.9 0 1 0 8 10.9 A2.9 2.9 0 1 0 8 5.1z"/></svg>
<svg style="left:433px;top:634px;" width="7" height="5" viewBox="0 0 7 5"><path d="M0 0 H7 L3.5 4.5z" fill="#AFB1B3"/></svg>
<svg style="left:0px;top:622px;" width="6" height="11" viewBox="0 0 6 11"><path d="M-4 0 L5 5.5 L-4 11z" fill="#499C54"/></svg>
<svg style="left:0px;top:652px;" width="9" height="15" viewBox="0 0 9 15"><circle cx="0" cy="7.5" r="7.5" fill="#C75450"/><rect x="-3" y="4" width="6" height="7" fill="none" stroke="#3C3F41" stroke-width="1.5"/></svg>
<svg style="left:0px;top:684px;" width="9" height="18" viewBox="0 0 9 18"><path d="M-2 6 A6 6 0 0 1 7 3" fill="none" stroke="#AFB1B3" stroke-width="1.6"/><rect x="0.5" y="8" width="5" height="5" fill="none" stroke="#AFB1B3" stroke-width="1.5"/><path d="M0 15 L5 17" stroke="#AFB1B3" stroke-width="1.5"/></svg>
<svg style="left:0px;top:716px;" width="9" height="12" viewBox="0 0 9 12"><path d="M-3 6 A5 5 0 0 0 7 6" fill="none" stroke="#AFB1B3" stroke-width="2"/><path d="M2 2 L6 6" stroke="#AFB1B3" stroke-width="1.8"/></svg>
<div style="left:0px;top:746px;width:10px;height:1px;background:#555555;"></div>
<div style="left:0px;top:761px;width:4px;height:12px;background:#5A5D60;"></div>
<svg style="left:0px;top:791px;" width="8" height="16" viewBox="0 0 8 16"><rect x="-6" y="3" width="13" height="12" fill="#5A5D60"/><circle cx="0" cy="9" r="3" fill="#3C3F41"/></svg>
<svg style="left:0px;top:822px;" width="8" height="20" viewBox="0 0 8 20"><path d="M0 6 L6 14 M6 8 V14 H0" fill="none" stroke="#5A5D60" stroke-width="1.8"/><path d="M-2 2 L4 7" stroke="#5A5D60" stroke-width="1.8"/></svg>
<svg style="left:0px;top:855px;" width="8" height="18" viewBox="0 0 8 18"><rect x="-8" y="1" width="14" height="16" fill="none" stroke="#5A5D60" stroke-width="1.8"/><path d="M-1 5 L3 9 L-1 13z" fill="#5A5D60"/></svg>
<div style="left:0px;top:884px;width:10px;height:1px;background:#555555;"></div>
<svg style="left:0px;top:896px;" width="7" height="10" viewBox="0 0 7 10"><path d="M-1 1 L5 5 L-1 9" fill="none" stroke="#AFB1B3" stroke-width="1.5"/></svg>
<svg style="left:819px;top:619px;" width="16" height="16" viewBox="0 0 16 16"><circle cx="8" cy="8" r="8" fill="#F0A732"/><path d="M4.8 4.8 L11.2 11.2 M11.2 4.8 L4.8 11.2" stroke="#3C3F41" stroke-width="2"/></svg>
<div class="t" style="left:841px;top:618.92px;font-size:15px;transform:scaleX(0.9528);"><span style="color:#E06C6C">Tests failed: 2</span><span style="color:#999999">, </span><span style="color:#BBBBBB">passed: 13</span><span style="color:#808080"> of 15 tests – 20 sec 127 ms</span></div>
<div style="left:16px;top:646px;width:797px;height:268px;background:#3C3F41;"></div>
<div style="left:17px;top:864px;width:796px;height:25px;background:#4B6EAF;"></div>
<div style="left:801px;top:724px;width:10px;height:190px;background:rgba(120,122,125,0.45);"></div>
<div style="left:16px;top:646px;width:797px;height:268px;overflow:hidden;">
<svg style="left:77px;top:-1px;" width="16" height="14" viewBox="0 0 16 14"><path d="M1.5 6.5 L6 11 L14.5 2.5" fill="none" stroke="#499C54" stroke-width="3"/></svg>
<div class="t" style="left:98px;top:-1.58px;font-size:15px;color:#BBBBBB;transform:scaleX(0.9968);">The public interface is correct</div>
<div class="t" style="right:23px;left:auto;top:1.14px;font-size:12px;color:#808080;">6 ms</div>
<svg style="left:77px;top:24px;" width="16" height="14" viewBox="0 0 16 14"><path d="M1.5 6.5 L6 11 L14.5 2.5" fill="none" stroke="#499C54" stroke-width="3"/></svg>
<div class="t" style="left:98px;top:23.42px;font-size:15px;color:#BBBBBB;transform:scaleX(1.0111);">Attempting to enqueue duplicate elements throws an exception</div>
<div class="t" style="right:23px;left:auto;top:26.14px;font-size:12px;color:#808080;">9 ms</div>
<svg style="left:77px;top:49px;" width="16" height="14" viewBox="0 0 16 14"><path d="M1.5 6.5 L6 11 L14.5 2.5" fill="none" stroke="#499C54" stroke-width="3"/></svg>
<div class="t" style="left:98px;top:48.42px;font-size:15px;color:#BBBBBB;transform:scaleX(1.0217);">Attempting to modify the priority of a nonexistent element throws an exception</div>
<div class="t" style="right:23px;left:auto;top:51.14px;font-size:12px;color:#808080;">2 ms</div>
<svg style="left:77px;top:74px;" width="16" height="14" viewBox="0 0 16 14"><path d="M1.5 6.5 L6 11 L14.5 2.5" fill="none" stroke="#499C54" stroke-width="3"/></svg>
<div class="t" style="left:98px;top:73.42px;font-size:15px;color:#BBBBBB;transform:scaleX(0.9907);">Smoke test enqueue while checking internal state of heap</div>
<div class="t" style="right:23px;left:auto;top:76.14px;font-size:12px;color:#808080;">16 ms</div>
<svg style="left:77px;top:99px;" width="16" height="14" viewBox="0 0 16 14"><path d="M1.5 6.5 L6 11 L14.5 2.5" fill="none" stroke="#499C54" stroke-width="3"/></svg>
<div class="t" style="left:98px;top:98.42px;font-size:15px;color:#BBBBBB;transform:scaleX(0.9938);">Smoke test dequeue while checking internal state of heap</div>
<div class="t" style="right:23px;left:auto;top:101.14px;font-size:12px;color:#808080;">2 ms</div>
<svg style="left:77px;top:124px;" width="16" height="14" viewBox="0 0 16 14"><path d="M1.5 6.5 L6 11 L14.5 2.5" fill="none" stroke="#499C54" stroke-width="3"/></svg>
<div class="t" style="left:98px;top:123.42px;font-size:15px;color:#BBBBBB;transform:scaleX(0.9839);">Smoke test decreaseKey while checking internal state of heap</div>
<div class="t" style="right:23px;left:auto;top:126.14px;font-size:12px;color:#808080;">1 ms</div>
<svg style="left:77px;top:149px;" width="16" height="14" viewBox="0 0 16 14"><path d="M1.5 6.5 L6 11 L14.5 2.5" fill="none" stroke="#499C54" stroke-width="3"/></svg>
<div class="t" style="left:98px;top:148.43px;font-size:15px;color:#BBBBBB;transform:scaleX(0.9840);">Smoke test increaseKey while checking internal state of heap</div>
<div class="t" style="right:23px;left:auto;top:151.14px;font-size:12px;color:#808080;">4 ms</div>
<svg style="left:77px;top:174px;" width="16" height="14" viewBox="0 0 16 14"><path d="M1.5 6.5 L6 11 L14.5 2.5" fill="none" stroke="#499C54" stroke-width="3"/></svg>
<div class="t" style="left:98px;top:173.43px;font-size:15px;color:#BBBBBB;transform:scaleX(0.9976);">Dequeueing with no further percolation leaves the heap in a consistent state</div>
<svg style="left:77px;top:199px;" width="16" height="14" viewBox="0 0 16 14"><path d="M1.5 6.5 L6 11 L14.5 2.5" fill="none" stroke="#499C54" stroke-width="3"/></svg>
<div class="t" style="left:98px;top:198.43px;font-size:15px;color:#BBBBBB;transform:scaleX(0.9858);">Check that increaseKey that percolates near end of array does not throw</div>
<div class="t" style="right:23px;left:auto;top:201.14px;font-size:12px;color:#808080;">1 ms</div>
<svg style="left:77px;top:222px;" width="17" height="17" viewBox="0 0 17 17"><circle cx="8.5" cy="8.5" r="8.2" fill="#E0A954"/><path d="M5.3 5.3 L11.7 11.7 M11.7 5.3 L5.3 11.7" stroke="#4B6EAF" stroke-width="2"/></svg>
<svg style="left:54px;top:225px;" width="8" height="11" viewBox="0 0 8 11"><path d="M1 0.8 L6.3 5.5 L1 10.2" fill="none" stroke="#AFB1B3" stroke-width="1.4"/></svg>
<div class="t" style="left:98px;top:223.43px;font-size:15px;color:#BBBBBB;transform:scaleX(0.9443);">Stress test increaseKey, decreaseKey</div>
<div class="t" style="right:23px;left:auto;top:226.14px;font-size:12px;color:#D0D6E0;">17 sec 418 ms</div>
<svg style="left:77px;top:249px;" width="16" height="14" viewBox="0 0 16 14"><path d="M1.5 6.5 L6 11 L14.5 2.5" fill="none" stroke="#499C54" stroke-width="3"/></svg>
<svg style="left:54px;top:250px;" width="8" height="11" viewBox="0 0 8 11"><path d="M1 0.8 L6.3 5.5 L1 10.2" fill="none" stroke="#AFB1B3" stroke-width="1.4"/></svg>
<div class="t" style="left:98px;top:248.43px;font-size:15px;color:#BBBBBB;transform:scaleX(0.9642);">Stress test enqueue, dequeue</div>
<div class="t" style="right:23px;left:auto;top:251.14px;font-size:12px;color:#808080;">2 sec 138 ms</div>
</div>
<div style="left:813px;top:646px;width:1026px;height:268px;background:#2B2B2B;"></div>
<div style="left:813px;top:646px;width:1026px;height:268px;overflow:hidden;">
<div class="m" style="left:17px;top:6.43px;font-size:17.5px;"><span style="color:#FF6B68">183</span></div>
<div class="m" style="left:17px;top:33.43px;font-size:17.5px;"><span style="color:#FF6B68">29816</span></div>
<div class="m" style="left:17px;top:61.43px;font-size:17.5px;"><span style="color:#FF6B68">29816</span></div>
<div class="m" style="left:17px;top:116.43px;font-size:17.5px;"><span style="color:#FF6B68">org.opentest4j.AssertionFailedError:</span></div>
<div class="m" style="left:17px;top:143.43px;font-size:17.5px;"><span style="color:#BBBBBB">Expected :</span><span style="color:#FF6B68">-2.125091797E9</span></div>
<div class="m" style="left:17px;top:171.43px;font-size:17.5px;"><span style="color:#BBBBBB">Actual   :</span><span style="color:#FF6B68">-2.125307034E9</span></div>
<div class="m" style="left:17px;top:198.43px;font-size:17.5px;"><span style="color:#3E8CE3;text-decoration:underline;text-underline-offset:3px;text-decoration-thickness:1px">&lt;Click to see difference&gt;</span></div>
<div style="left:17px;top:248px;width:190px;height:20px;background:#3A3A3A;"></div>
<div class="m" style="left:17px;top:253.43px;font-size:17.5px;"><span style="color:#8C8C8C"> &lt;5 internal lines&gt;</span></div>
<svg style="left:4px;top:258px;" width="11" height="11" viewBox="0 0 11 11"><rect x="0.5" y="0.5" width="10" height="10" fill="none" stroke="#666666"/><path d="M5.5 2.5 V8.5 M2.5 5.5 H8.5" stroke="#666666"/></svg>
<div style="left:17px;top:256px;width:767px;height:10px;background:rgba(100,100,100,0.55);"></div>
<div style="left:1013px;top:1px;width:10px;height:43px;background:rgba(110,110,110,0.6);"></div>
</div>
<div style="left:1839px;top:610px;width:12px;height:304px;background:#3C3F41;"></div>
<div style="left:1838px;top:646px;width:1px;height:268px;background:#2F3133;"></div>
<svg style="left:1848px;top:721px;" width="3" height="14" viewBox="0 0 3 14"><rect x="1" y="0" width="2" height="2" fill="#AFB1B3"/><rect x="1" y="5" width="2" height="2" fill="#AFB1B3"/><rect x="1" y="10" width="2" height="2" fill="#AFB1B3"/></svg>
<svg style="left:1848px;top:752px;" width="3" height="14" viewBox="0 0 3 14"><rect x="1" y="0" width="2" height="2" fill="#AFB1B3"/><rect x="1" y="5" width="2" height="2" fill="#AFB1B3"/><rect x="1" y="10" width="2" height="2" fill="#AFB1B3"/></svg>
<div style="left:1849px;top:781px;width:2px;height:7px;background:#AFB1B3;"></div>
<div style="left:0px;top:914px;width:1851px;height:1px;background:#2F3133;"></div>
<div style="left:0px;top:915px;width:1851px;height:16px;background:#3C3F41;"></div>
<div style="left:39px;top:915px;width:66px;height:16px;background:#2F3032;"></div>
<svg style="left:0px;top:923px;" width="8" height="10" viewBox="0 0 8 10"><path d="M2 1 L6 3 L4 10" stroke="#8C8C8C" stroke-width="2" fill="none"/></svg>
<div class="t" style="left:13px;top:924.24px;font-size:13px;color:#BBBBBB;transform:scaleX(1.0226);">Git</div>
<svg style="left:53px;top:924px;" width="11" height="12" viewBox="0 0 11 12"><path d="M0 0 L10 6 L0 12z" fill="#AFB1B3"/></svg>
<div class="t" style="left:73px;top:924.24px;font-size:13px;color:#FFFFFF;transform:scaleX(0.9640);">Run</div>
<svg style="left:120px;top:924px;" width="14" height="10" viewBox="0 0 14 10"><rect x="0" y="0" width="2.2" height="2" fill="#AFB1B3"/><rect x="4" y="0" width="10" height="2" fill="#AFB1B3"/><rect x="0" y="4" width="2.2" height="2" fill="#AFB1B3"/><rect x="4" y="4" width="10" height="2" fill="#AFB1B3"/><rect x="0" y="8" width="2.2" height="2" fill="#AFB1B3"/><rect x="4" y="8" width="10" height="2" fill="#AFB1B3"/></svg>
<div class="t" style="left:139px;top:924.24px;font-size:13px;color:#BBBBBB;transform:scaleX(0.9912);">TODO</div>
<svg style="left:202px;top:922px;" width="14" height="12" viewBox="0 0 14 12"><circle cx="7" cy="7" r="7" fill="#AFB1B3"/><rect x="6" y="2.5" width="2" height="6" fill="#3C3F41"/></svg>
<div class="t" style="left:222px;top:924.24px;font-size:13px;color:#BBBBBB;transform:scaleX(1.0196);">Problems</div>
<svg style="left:302px;top:921px;" width="15" height="12" viewBox="0 0 15 12"><path d="M7.5 0 L9 2 H12 L10 5 H14 V12 H1 V5 H5 L3 2 H6z" fill="#AFB1B3"/></svg>
<div class="t" style="left:323px;top:924.24px;font-size:13px;color:#BBBBBB;transform:scaleX(1.0440);">Debug</div>
<svg style="left:387px;top:923px;" width="15" height="10" viewBox="0 0 15 10"><rect x="0" y="0" width="15" height="12" fill="#AFB1B3"/><path d="M3 2 L7 5 L3 8" fill="none" stroke="#3C3F41" stroke-width="1.5"/></svg>
<div class="t" style="left:407px;top:924.24px;font-size:13px;color:#BBBBBB;transform:scaleX(1.0789);">Terminal</div>
<svg style="left:481px;top:921px;" width="15" height="12" viewBox="0 0 15 12"><path d="M2 4 L7 0 L10 3 L8 5 L14 12 L12 12 L6 6 L4 7z" fill="#AFB1B3"/></svg>
<div class="t" style="left:502px;top:924.24px;font-size:13px;color:#BBBBBB;transform:scaleX(1.0373);">Build</div>
<svg style="left:1755px;top:922px;" width="17" height="17" viewBox="0 0 17 17"><circle cx="8.5" cy="8.5" r="8.5" fill="#499C54"/><text x="5.5" y="14" font-family="Liberation Sans" font-size="11" font-weight="bold" fill="#FFFFFF">1</text></svg>
<div class="t" style="left:1777px;top:924.24px;font-size:13px;color:#BBBBBB;transform:scaleX(1.0077);">Event Log</div>
</body></html>
